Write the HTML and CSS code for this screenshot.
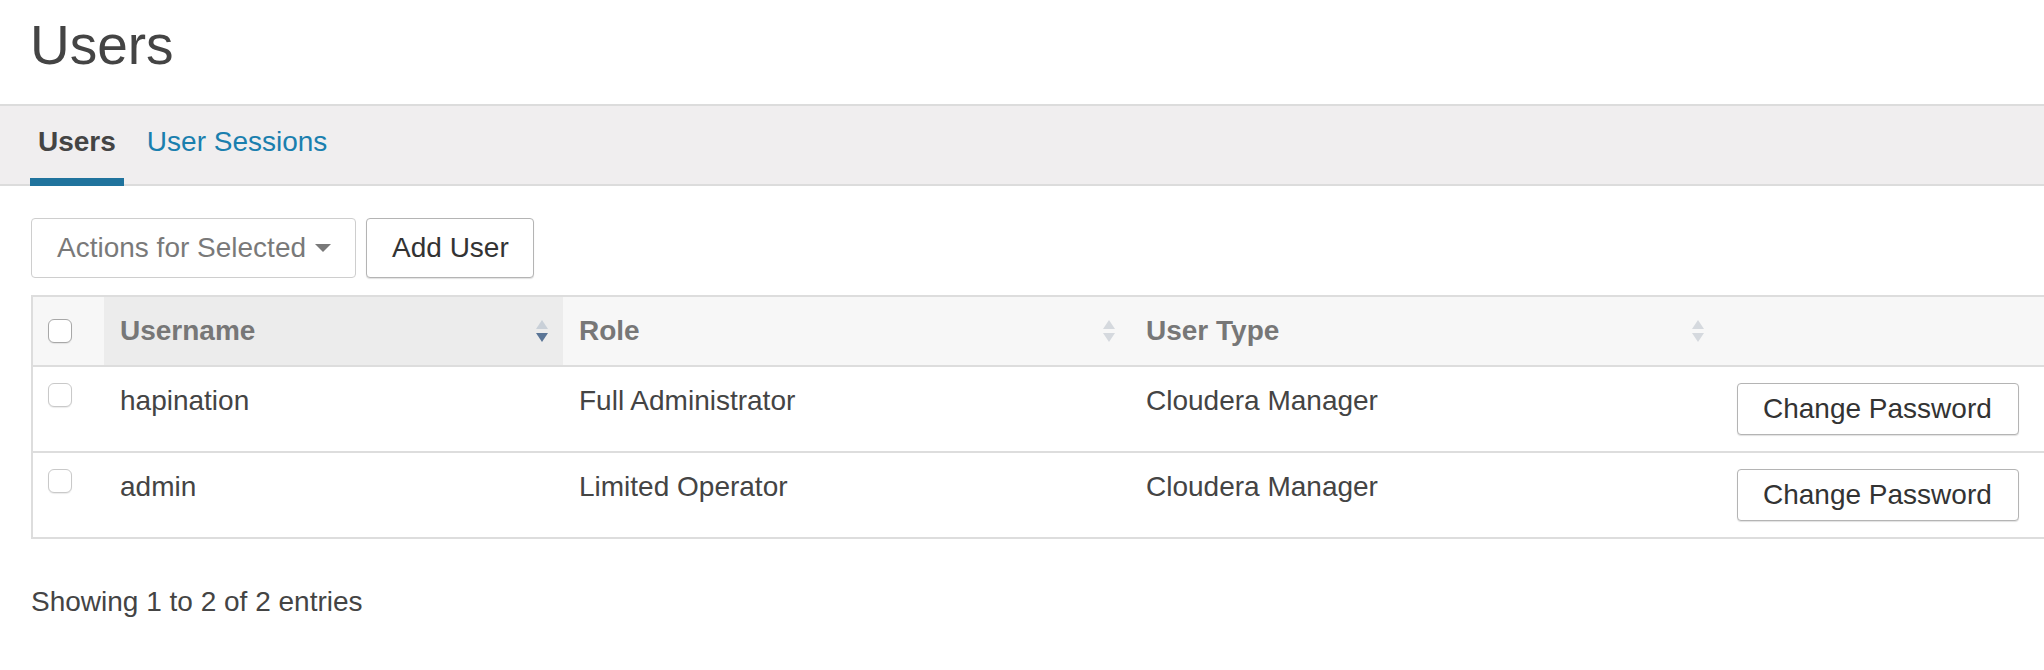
FILE: index.html
```html
<!DOCTYPE html>
<html lang="en">
<head>
<meta charset="utf-8">
<title>Users</title>
<link rel="stylesheet" href="styles.css">
</head>
<body>
<header class="page-head">
  <h1 class="title">Users</h1>
</header>
<nav class="tabs">
  <a class="tab tab-active">Users</a>
  <a class="tab">User Sessions</a>
</nav>
<main class="content">
  <div class="toolbar">
    <button class="btn btn-disabled">Actions for Selected<span class="caret"></span></button>
    <button class="btn">Add User</button>
  </div>
  <div class="table-wrap">
    <table class="grid">
      <colgroup>
        <col class="c-check">
        <col class="c-user">
        <col class="c-role">
        <col class="c-type">
        <col class="c-act">
      </colgroup>
      <thead>
        <tr>
          <th class="th-check"><input type="checkbox" class="cb cb-head"></th>
          <th class="th-sorted"><div class="th-inner"><span>Username</span>
            <svg class="sort" width="12" height="22" viewBox="0 0 12 22"><polygon points="6,0 12,9 0,9" fill="#c9d0d8"/><polygon points="0,13 12,13 6,22" fill="#5a7596"/></svg></div></th>
          <th><div class="th-inner"><span>Role</span>
            <svg class="sort" width="12" height="22" viewBox="0 0 12 22"><polygon points="6,0 12,9 0,9" fill="#d5d9de"/><polygon points="0,13 12,13 6,22" fill="#d5d9de"/></svg></div></th>
          <th><div class="th-inner"><span>User Type</span>
            <svg class="sort" width="12" height="22" viewBox="0 0 12 22"><polygon points="6,0 12,9 0,9" fill="#d5d9de"/><polygon points="0,13 12,13 6,22" fill="#d5d9de"/></svg></div></th>
          <th></th>
        </tr>
      </thead>
      <tbody>
        <tr>
          <td><input type="checkbox" class="cb"></td>
          <td>hapination</td>
          <td>Full Administrator</td>
          <td>Cloudera Manager</td>
          <td class="td-act"><button class="btn btn-sm">Change Password</button></td>
        </tr>
        <tr>
          <td><input type="checkbox" class="cb"></td>
          <td>admin</td>
          <td>Limited Operator</td>
          <td>Cloudera Manager</td>
          <td class="td-act"><button class="btn btn-sm">Change Password</button></td>
        </tr>
      </tbody>
    </table>
  </div>
  <p class="info">Showing 1 to 2 of 2 entries</p>
</main>
</body>
</html>
```

FILE: styles.css
```css
html, body {
  margin: 0;
  padding: 0;
  background: #fff;
}
body {
  font-family: "Liberation Sans", Arial, Helvetica, sans-serif;
  font-size: 28px;
  color: #444;
  overflow: hidden;
}

.page-head {
  padding-left: 31px;
}
.title {
  margin: 14px 0 27px -1px;
  font-size: 55px;
  line-height: 63px;
  font-weight: normal;
  color: #444;
}

.tabs {
  display: flex;
  gap: 15px;
  padding-left: 30px;
  background: #f0eeef;
  border-top: 2px solid #dcdcdc;
  border-bottom: 2px solid #dcdcdc;
}
.tab {
  display: block;
  padding: 16px 8px;
  line-height: 40px;
  border-bottom: 8px solid transparent;
  margin-bottom: -2px;
  color: #1a7fae;
  cursor: pointer;
}
.tab-active {
  color: #444;
  font-weight: bold;
  border-bottom-color: #20739d;
}

.content {
  padding-left: 31px;
}

.toolbar {
  display: flex;
  gap: 10px;
  margin-top: 32px;
}
.btn {
  font-family: inherit;
  font-size: 28px;
  line-height: 40px;
  color: #333;
  background: #fff;
  border: 1px solid #b4b4b4;
  border-radius: 4px;
  padding: 9px 24px 9px 25px;
  box-shadow: 0 1px 1px rgba(0, 0, 0, 0.12);
  display: inline-flex;
  align-items: center;
  margin: 0;
}
.btn-disabled {
  opacity: 0.65;
  box-shadow: none;
}
.caret {
  display: inline-block;
  width: 0;
  height: 0;
  margin-left: 9px;
  border-top: 8px solid #333;
  border-left: 8px solid transparent;
  border-right: 8px solid transparent;
}
.btn-sm {
  padding: 5px 26px 5px 25px;
}

.table-wrap {
  margin-top: 17px;
}
.grid {
  width: 100%;
  table-layout: fixed;
  border-collapse: separate;
  border-spacing: 0;
  border-top: 2px solid #dddddd;
  border-left: 2px solid #dddddd;
}
.c-check { width: 71px; }
.c-user { width: 459px; }
.c-role { width: 567px; }
.c-type { width: 589px; }

.grid th {
  background: #f7f7f7;
  color: #777;
  font-weight: bold;
  text-align: left;
  padding: 16px 15px 16px 16px;
  line-height: 36px;
  vertical-align: middle;
  border-bottom: 2px solid #dddddd;
}
.grid th.th-sorted {
  background: #ececec;
}
.grid th.th-check {
  padding-left: 15px;
}
.th-inner {
  display: flex;
  justify-content: space-between;
  align-items: center;
}
.sort {
  display: block;
  flex: none;
}

.grid td {
  padding: 16px 16px;
  line-height: 36px;
  vertical-align: top;
  border-bottom: 2px solid #dddddd;
  color: #444;
}
.grid td:first-child {
  padding-left: 15px;
}
.grid td.td-act {
  padding-left: 18px;
}

.cb {
  -webkit-appearance: none;
  appearance: none;
  display: block;
  width: 24px;
  height: 24px;
  margin: 0;
  background: #fff;
  border: 1.5px solid #c9c9c9;
  border-radius: 6px;
  box-shadow: 0 1px 1px rgba(0, 0, 0, 0.08);
}
.cb-head {
  border-color: #a8a8a8;
}

.info {
  margin: 43px 0 0;
  line-height: 40px;
  color: #444;
}
```
